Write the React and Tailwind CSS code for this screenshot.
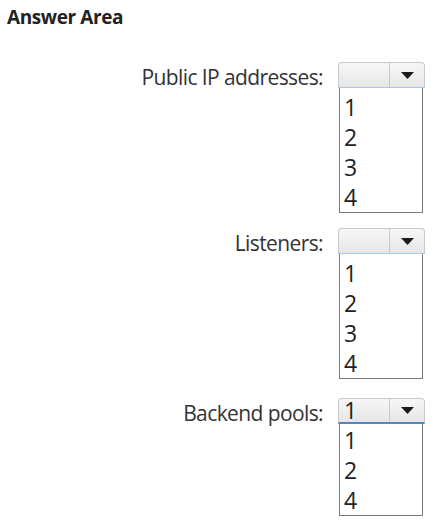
import React from "react";

function Arrow() {
  return (
    <svg width="13" height="7" viewBox="0 0 13 7" className="block">
      <polygon points="0,0 13,0 6.5,7" fill="#1a1a1a" />
    </svg>
  );
}

function Dropdown({ value, options, selected }) {
  return (
    <div className="w-[87px] flex flex-col">
      <div
        className={
          "h-[26px] flex rounded-t-[4px] border border-[#c9c9c9] bg-gradient-to-b from-[#f7f7f7] to-[#e6e6e6] " +
          (selected ? "border-b-[#4f86c6] border-b-2" : "border-b-[#a9c7e6]")
        }
      >
        <div className="w-[51px] border-r border-[#c9c9c9] flex items-center pl-[5px] text-[23px] leading-none text-[#222]">
          {value}
        </div>
        <div className="flex-1 flex items-center justify-center">
          <Arrow />
        </div>
      </div>
      <div
        className={
          "border border-t-0 border-[#7a7a7a] bg-white ml-[1px] mr-[2px] " +
          (selected ? "pt-[1px]" : "pt-[4px]")
        }
      >
        {options.map((o) => (
          <div key={o} className="h-[30px] flex items-center pl-[4px] text-[23px] leading-none text-[#222]">
            {o}
          </div>
        ))}
      </div>
    </div>
  );
}

function Row({ label, value, options, selected, mt }) {
  return (
    <div className={"flex justify-end pr-[9px] " + mt}>
      <div className="h-[26px] flex items-center mr-[15px] text-[21px] tracking-[-0.6px] text-[#333] leading-none pt-[4px]">
        {label}
      </div>
      <Dropdown value={value} options={options} selected={selected} />
    </div>
  );
}

export default function App() {
  return (
    <div
      className="w-[434px] h-[523px] bg-white overflow-hidden"
      style={{ fontFamily: '"Open Sans", "Noto Sans", sans-serif' }}
    >
      <div className="pl-[7px] pt-[7px] text-[19px] font-bold text-[#222] leading-[20px] tracking-[-0.4px]">
        Answer Area
      </div>
      <div className="flex flex-col">
        <Row label="Public IP addresses:" value="" options={["1", "2", "3", "4"]} mt="mt-[35px]" />
        <Row label="Listeners:" value="" options={["1", "2", "3", "4"]} mt="mt-[15px]" />
        <Row label="Backend pools:" value="1" options={["1", "2", "4"]} selected mt="mt-[19px]" />
      </div>
    </div>
  );
}
